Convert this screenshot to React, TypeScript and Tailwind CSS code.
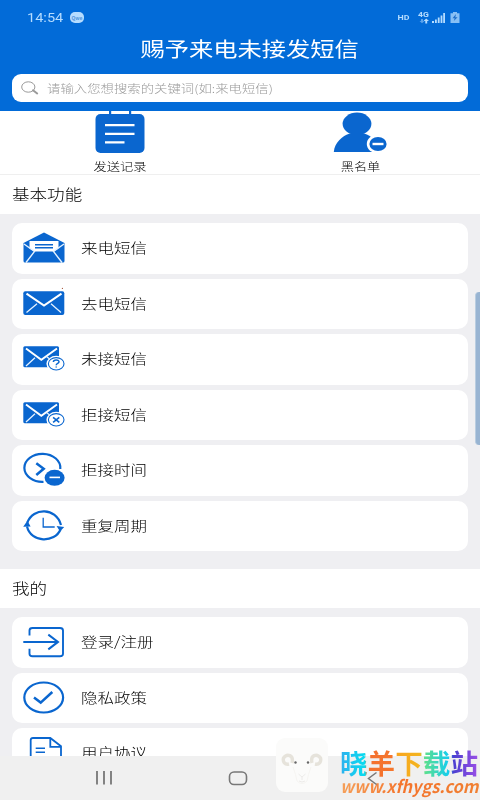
import React, { ReactNode } from 'react';

import clsx from 'clsx';

const BLUE = '#0a66cf';

interface IconProps {
  children: ReactNode;
}

// Every row icon is drawn on the same 44x36 grid
const RowIcon = ({ children }: IconProps) => (
  <svg
    width="44"
    height="36"
    viewBox="0 0 44 36"
    fill="none"
    stroke={BLUE}
    strokeWidth="2"
    className="shrink-0"
  >
    {children}
  </svg>
);

const OpenMailIcon = () => (
  <RowIcon>
    <path d="M1.5 13 L22 2.6 L42.5 13 V31 Q42.5 32.5 41 32.5 H3 Q1.5 32.5 1.5 31 Z" fill={BLUE} stroke="none" />
    <path d="M7.5 11 H36.5 V18.5 L31.5 21.5 H12.5 L7.5 18.5 Z" fill="#fff" stroke="none" />
    <path d="M13 14.8 H31 M13 17.8 H31" strokeWidth="1.4" />
    <path d="M2 14 L12.5 21.5 L4 32.5 M42 14 L31.5 21.5 L40 32.5" stroke="#e3f1ff" strokeWidth="1.4" />
  </RowIcon>
);

const MailIcon = () => (
  <RowIcon>
    <rect x="1.3" y="5.2" width="41" height="23.8" rx="2" fill={BLUE} stroke="none" />
    <path d="M4.5 7.6 L22 19.6 L39.5 7.6" stroke="#fff" strokeWidth="2" />
    <path d="M4.5 26.5 L15 17.8 M39 26.5 L29 17.8" stroke="#e3f1ff" strokeWidth="1.3" />
    <circle cx="40.4" cy="2.4" r="0.6" fill="#a5583c" stroke="none" />
  </RowIcon>
);

const MailBadgeIcon = ({ children }: IconProps) => (
  <RowIcon>
    <rect x="1.3" y="5.2" width="35.7" height="21" rx="1.5" fill={BLUE} stroke="none" />
    <path d="M4 7.4 L19.3 18.8 L35 7.4" stroke="#fff" strokeWidth="1.9" />
    <path d="M4 25 L13 16.8 M27 17.6 L24.5 15.6" stroke="#e3f1ff" strokeWidth="1.3" />
    <ellipse cx="34.2" cy="22.8" rx="9.8" ry="8" fill="#fff" stroke="none" />
    <ellipse cx="34.2" cy="22.8" rx="7.8" ry="6.2" fill="#fff" strokeWidth="1.1" />
    {children}
  </RowIcon>
);

const MissedMailIcon = () => (
  <MailBadgeIcon>
    <path
      d="M31.4 21 C31.4 18.3 37 18.3 37 20.8 C37 22.5 34.2 22.3 34.2 24.2 M34.2 25.4 V26.6"
      strokeWidth="1.5"
    />
  </MailBadgeIcon>
);

const RejectedMailIcon = () => (
  <MailBadgeIcon>
    <path d="M31.1 20.3 L37.3 25.3 M37.3 20.3 L31.1 25.3" strokeWidth="1.6" />
  </MailBadgeIcon>
);

const RejectTimeIcon = () => (
  <RowIcon>
    <path d="M38.3 17 A18 14 0 1 0 21.5 29.8" strokeWidth="2.2" />
    <path d="M14.3 11.3 L21.7 16.8 L14.3 23" strokeWidth="2.5" />
    <ellipse cx="32.6" cy="25.8" rx="10" ry="8" fill={BLUE} stroke="none" />
    <path d="M27.5 25.4 H38" stroke="#fff" strokeWidth="1.6" />
  </RowIcon>
);

const RepeatIcon = () => (
  <RowIcon>
    <path d="M5.4 14.5 C11 -0.6 34 -0.8 39 17 M38.5 21.5 C33 35 9 35.2 5 18.5" strokeWidth="2.2" />
    <path d="M1.2 18.8 L5.4 12.8 L8.6 18.5 Z M34.6 18 L42.2 19 L38 23.4 Z" fill={BLUE} stroke="none" />
    <path d="M21.2 9.7 V19 H32.7" strokeWidth="1.3" />
  </RowIcon>
);

const LoginIcon = () => (
  <RowIcon>
    <path
      d="M7.5 11.5 V6.5 Q7.5 4 10.5 4 H38 Q41 4 41 6.5 V29.7 Q41 32.2 38 32.2 H10.5 Q7.5 32.2 7.5 29.7 V24.7"
      strokeWidth="1.9"
    />
    <path d="M1.3 17.9 H36 M26.3 10.6 L36 17.9 L26.3 25.4" strokeWidth="2" />
  </RowIcon>
);

const PolicyIcon = () => (
  <RowIcon>
    <ellipse cx="21.7" cy="17.5" rx="19.4" ry="15" strokeWidth="2.2" />
    <path d="M12 17.6 L18.7 22.6 L30.3 12" strokeWidth="2.5" />
  </RowIcon>
);

const AgreementIcon = () => (
  <RowIcon>
    <path d="M8.7 36 V5 Q8.7 3 11 3 H28.3 L39 11.3 V36" strokeWidth="1.8" />
    <path d="M28.3 3 V11.8 H39" strokeWidth="1.8" />
    <path d="M13.7 13.2 H23 M13.7 17.2 H23" strokeWidth="1.5" />
  </RowIcon>
);

const BASIC_ITEMS = [
  { id: 'incoming', name: '来电短信', icon: <OpenMailIcon /> },
  { id: 'outgoing', name: '去电短信', icon: <MailIcon /> },
  { id: 'missed', name: '未接短信', icon: <MissedMailIcon /> },
  { id: 'rejected', name: '拒接短信', icon: <RejectedMailIcon /> },
  { id: 'reject-time', name: '拒接时间', icon: <RejectTimeIcon /> },
  { id: 'repeat', name: '重复周期', icon: <RepeatIcon /> },
];

const MY_ITEMS = [
  { id: 'login', name: '登录/注册', icon: <LoginIcon /> },
  { id: 'privacy', name: '隐私政策', icon: <PolicyIcon /> },
  { id: 'agreement', name: '用户协议', icon: <AgreementIcon /> },
];

const StatusBar = () => (
  <div className="flex items-center h-[35px] pl-[27px] pr-[20px] text-[#b5dcff]">
    <span className="w-[37px] text-[13px] leading-none whitespace-nowrap origin-left scale-x-[1.12] font-['Roboto',sans-serif]">
      14:54
    </span>
    <span className="ml-[6px] flex items-center justify-center w-[14px] h-[11px] rounded-[5px] bg-[#b5dcff] text-[5px] leading-none font-bold text-[#4f94dd]">
      Qwe
    </span>
    <span className="ml-auto text-[8px] leading-none font-bold scale-x-[1.1] font-['Roboto',sans-serif]">
      HD
    </span>
    <div className="ml-[9px] flex items-end h-[13px]">
      <div className="w-[13px] h-[13px]">
        <div className="text-[7.5px] leading-[7px] font-bold origin-left scale-x-[1.15] font-['Roboto',sans-serif]">
          4G
        </div>
        <svg width="13" height="6" viewBox="0 0 13 6" fill="currentColor">
          <path d="M3 1 H5 V3 H6.5 L4 5.2 L1.5 3 H3 Z" opacity="0.5" />
          <path d="M7.3 5.5 V3 H5.5 L8.2 0.5 L11 3 H9.2 V5.5 Z" />
        </svg>
      </div>
      <svg width="29" height="13" viewBox="13 0 29 13" fill="currentColor">
        <path d="M14 10 H16 V12 H14 Z M17 8.5 H18.8 V12 H17 Z M19.8 6.5 H21.6 V12 H19.8 Z M22.6 4.5 H24.4 V12 H22.6 Z M25.2 2 H27 V12 H25.2 Z" />
        <path d="M35 1 H39 V2.2 H41.5 V12 H32.5 V2.2 H35 Z" opacity="0.75" />
        <path d="M38 3 L34.5 7.3 H36.7 L35.8 10 L39.6 6.3 H37.3 Z" fill="#1f6fca" />
      </svg>
    </div>
  </div>
);

const Header = () => (
  <header className="h-[111px] shrink-0 bg-[#026bd8]">
    <StatusBar />
    <h1 className="flex items-center justify-center h-[28px] pl-[19px] text-[20px] leading-none text-white whitespace-nowrap scale-x-[1.213]">
      <span className="-ml-[3px]">赐予来电未接发短信</span>
    </h1>
    <div className="flex items-center h-[28px] mx-3 mt-[11px] pl-[9px] rounded-[9px] bg-white text-[#9a9a9a]">
      <svg width="18" height="14" viewBox="0 0 18 14" fill="none" stroke="currentColor">
        <ellipse cx="7.3" cy="6" rx="6.6" ry="5.2" strokeWidth="1" />
        <path d="M12 9.3 L16.2 12.5" strokeWidth="2" strokeLinecap="round" />
      </svg>
      <span className="ml-[8px] text-[11px] leading-none whitespace-nowrap font-light origin-left scale-x-[1.217]">
        请输入您想搜索的关键词(如:来电短信)
      </span>
    </div>
  </header>
);

const QuickActions = () => (
  <div className="grid grid-cols-2 h-[63px] shrink-0 bg-white">
    <div className="flex flex-col items-center">
      <svg width="50" height="43" viewBox="0 0 50 43">
        <path d="M14 0 H16.2 V6 H14 Z M34 0 H36.2 V6 H34 Z" fill={BLUE} />
        <rect x="0.5" y="3" width="49" height="39" rx="5" fill={BLUE} />
        <path d="M10 14.2 H39.5 M10 22.8 H39.5 M10 31.3 H29.5" stroke="#fff" strokeWidth="2.2" />
      </svg>
      <span className="mt-[7px] text-[11px] leading-none whitespace-nowrap text-black font-light scale-x-[1.2]">
        发送记录
      </span>
    </div>
    <div className="flex flex-col items-center">
      <svg width="54" height="43" viewBox="0 0 54 43">
        <ellipse cx="24" cy="12.8" rx="14.4" ry="11.2" fill={BLUE} />
        <path d="M0.8 41 C1.5 31.5 9 25 17 22.5 H31 C39 25 46 31.5 47 41 Z" fill={BLUE} />
        <ellipse cx="44.8" cy="33" rx="11" ry="9.4" fill="#fff" />
        <ellipse cx="45" cy="33" rx="8.6" ry="7" fill={BLUE} />
        <path d="M39.5 33 H50.5" stroke="#fff" strokeWidth="2.4" />
      </svg>
      <span className="mt-[7px] text-[11px] leading-none whitespace-nowrap text-black font-light scale-x-[1.2]">
        黑名单
      </span>
    </div>
  </div>
);

interface SectionProps {
  title: string;
  className?: string;
  items: { id: string; name: string; icon: ReactNode }[];
}

const Section = ({ title, className, items }: SectionProps) => (
  <section className={clsx('shrink-0', className)}>
    <h2 className="flex items-center h-[39px] pl-3 bg-white">
      <span className="text-[14.5px] leading-none text-black font-light origin-left scale-x-[1.21]">
        {title}
      </span>
    </h2>
    <ul className="flex flex-col gap-[5px] px-3 pt-[9px]">
      {items.map((item) => (
        <li key={item.id} className="flex items-center h-[50.5px] pl-[10px] rounded-[10px] bg-white">
          {item.icon}
          <span className="ml-[15px] pb-px text-[13.5px] leading-none whitespace-nowrap text-black font-light origin-left scale-x-[1.22]">
            {item.name}
          </span>
        </li>
      ))}
    </ul>
  </section>
);

const NavBar = () => (
  <nav className="h-11 shrink-0 bg-[#f0f0f0]">
    <svg width="480" height="44" viewBox="0 0 480 44" fill="none" stroke="#777" strokeWidth="1.8">
      <path d="M97 15 V28.5 M104 15 V28.5 M111 15 V28.5" />
      <rect x="229.5" y="16" width="17" height="12.5" rx="4.5" strokeWidth="1.6" />
    </svg>
  </nav>
);

const Watermark = () => (
  <div className="absolute left-[276px] top-[738px] flex">
    <div className="w-[52px] h-[54px] rounded-[9px] bg-[#fbfbfa]">
      <svg width="52" height="54" viewBox="0 0 52 54" fill="none">
        <path d="M16 25 C18 17 11 15 7.5 20 C6.5 24 9 27 13 26" stroke="#e6e3db" strokeWidth="3.4" />
        <path d="M36 25 C34 17 41 15 44.5 20 C45.5 24 43 27 39 26" stroke="#e6e3db" strokeWidth="3.4" />
        <path d="M17 29 Q20 37 21 43 Q26 48 31 43 Q32 37 35 29" stroke="#f6f5f2" />
        <path d="M22.5 36 L26 39 L29.5 36 M26 39 V42 M23 43 Q26 45 29 43" stroke="#e8e7e4" strokeWidth="0.8" />
        <circle cx="19.5" cy="24.5" r="1.2" fill="#666" />
        <circle cx="32" cy="24.5" r="1.2" fill="#666" />
      </svg>
    </div>
    <div className="relative ml-[12px] mt-[10px] w-[140px]">
      <div className="w-[138px] h-[29px] text-[27.6px] leading-[29px] font-bold whitespace-nowrap text-transparent bg-clip-text bg-[linear-gradient(90deg,#2fb0ee_0%,#08dcf0_18%,#f4702f_20%,#f5762c_39%,#f9a51f_41%,#f3b51f_58%,#5fe08a_61%,#12cdf0_79%,#4a3fd0_82%,#9a4fe6_100%)]">
        晓羊下载站
      </div>
      <div className="w-fit h-[23px] -mt-px pr-[2px] text-[17.5px] leading-[20px] font-bold italic whitespace-nowrap origin-left scale-x-[0.935] text-transparent bg-clip-text bg-[linear-gradient(90deg,#f5a05a,#f4742c_45%,#f08032)]">
        www.xfhygs.com
      </div>
      <svg className="absolute left-[27px] top-[23px]" width="11" height="15" viewBox="0 0 11 15">
        <path d="M9.5 1.5 L1.5 7.5 L9.5 13.5" fill="none" stroke="#777" strokeWidth="1.5" />
      </svg>
    </div>
  </div>
);

const App = () => (
  <div className="relative flex flex-col w-[480px] h-[800px] overflow-hidden bg-[#efeff2] font-['Noto_Sans_CJK_SC',sans-serif]">
    <Header />
    <main className="flex flex-col flex-1 min-h-0 overflow-hidden">
      <QuickActions />
      <Section title="基本功能" className="border-t border-[#efefef]" items={BASIC_ITEMS} />
      <Section title="我的" className="mt-[18px]" items={MY_ITEMS} />
    </main>
    <NavBar />
    <div className="absolute right-0 top-[292px] w-[5px] h-[153px] rounded-l-[4px] border-l border-[#b9cde0] bg-[#98b4d2]" />
    <Watermark />
  </div>
);

export default App;
